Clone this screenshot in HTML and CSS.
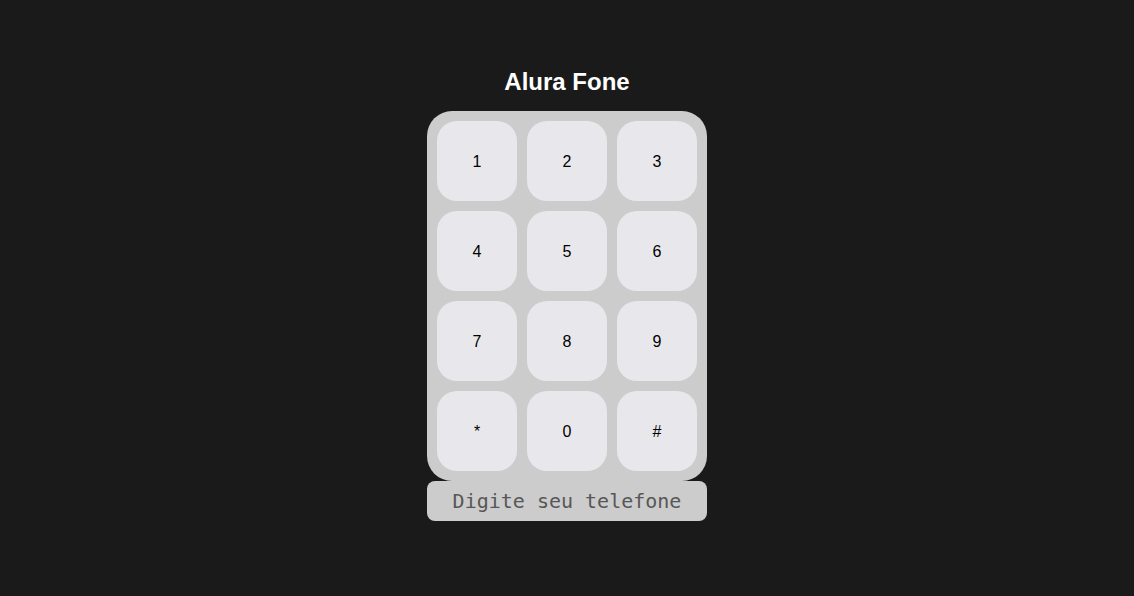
FILE: index.html
```html
<!DOCTYPE html>
<html lang="pt-BR">
<head>
<meta charset="utf-8">
<title>Alura Fone</title>
<link rel="stylesheet" href="styles.css">
</head>
<body>
<main class="app">
  <h1 class="title">Alura Fone</h1>
  <section class="keypad">
    <button class="key">1</button>
    <button class="key">2</button>
    <button class="key">3</button>
    <button class="key">4</button>
    <button class="key">5</button>
    <button class="key">6</button>
    <button class="key">7</button>
    <button class="key">8</button>
    <button class="key">9</button>
    <button class="key">*</button>
    <button class="key">0</button>
    <button class="key">#</button>
  </section>
  <input class="phone" type="tel" placeholder="Digite seu telefone">
</main>
</body>
</html>
```

FILE: styles.css
```css
html, body {
  margin: 0;
  padding: 0;
  background: #1a1a1a;
  height: 100%;
}
body {
  font-family: "Liberation Sans", Arial, sans-serif;
}
.app {
  display: flex;
  flex-direction: column;
  align-items: center;
  padding-top: 68px;
}
.title {
  margin: 0 0 15px;
  font-size: 24px;
  line-height: 28px;
  font-weight: bold;
  color: #ffffff;
}
.keypad {
  display: grid;
  grid-template-columns: repeat(3, 80px);
  grid-auto-rows: 80px;
  gap: 10px;
  padding: 10px;
  background: #cccccc;
  border-radius: 25px;
}
.key {
  border: none;
  margin: 0;
  padding: 2px 0 0;
  background: #e8e8ec;
  border-radius: 20px;
  font-family: "Liberation Sans", Arial, sans-serif;
  font-size: 16px;
  color: #000;
}
.phone {
  box-sizing: border-box;
  width: 280px;
  height: 40px;
  margin: 0;
  border: none;
  border-radius: 8px;
  background: #cccccc;
  font-family: "DejaVu Sans Mono", monospace;
  font-size: 20px;
  text-align: center;
  color: #333;
  outline: none;
}
.phone::placeholder {
  color: #575757;
}
```
